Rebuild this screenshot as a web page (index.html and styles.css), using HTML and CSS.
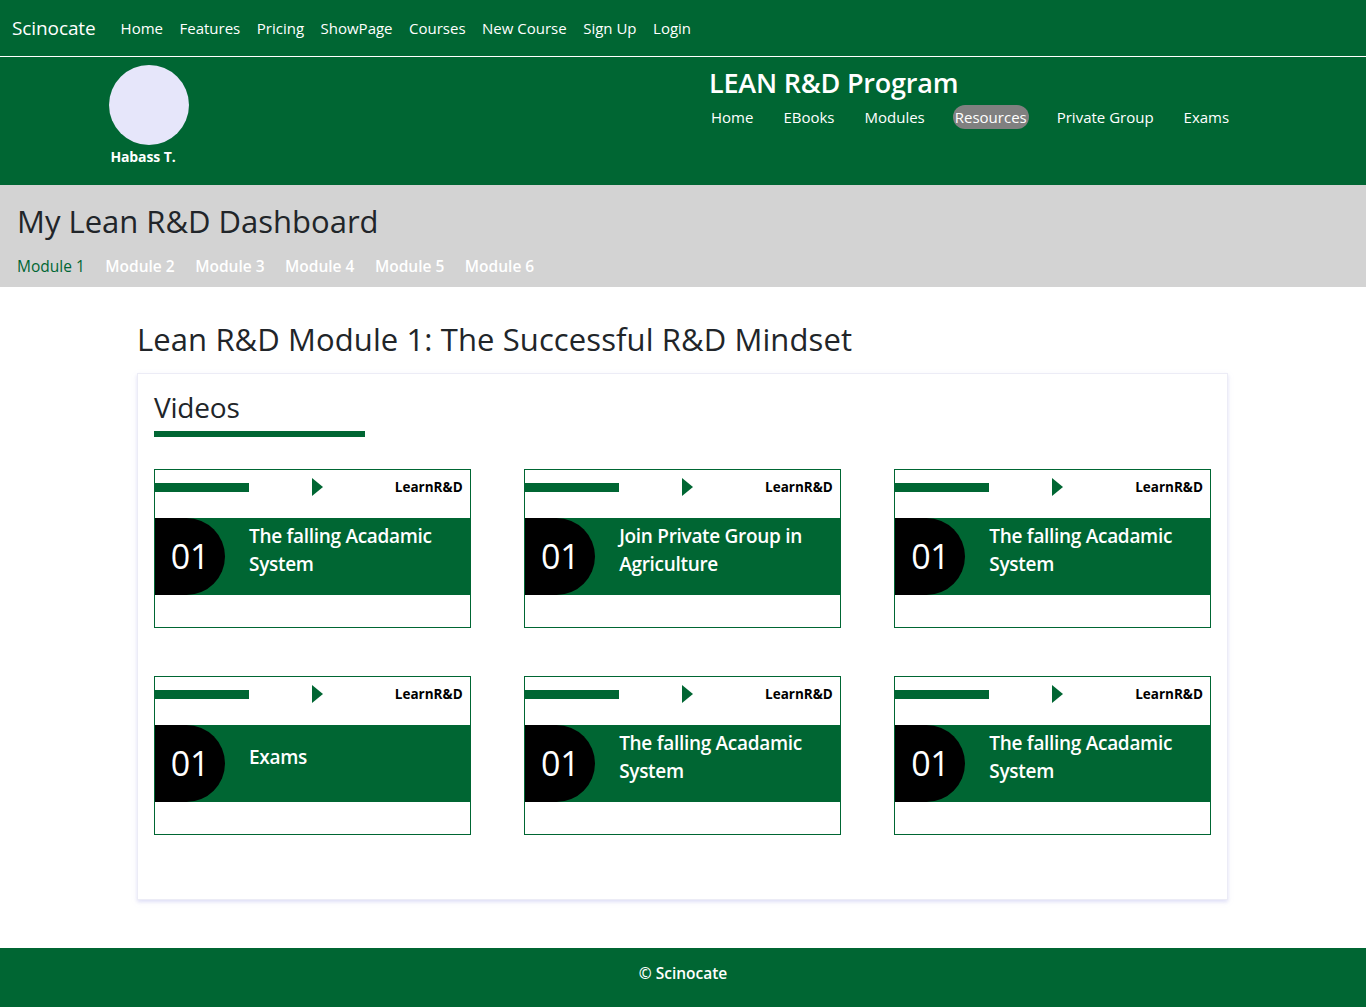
FILE: index.html
```html
<!DOCTYPE html>
<html lang="en">
<head>
<meta charset="utf-8">
<title>Scinocate - Lean R&amp;D Dashboard</title>
<link rel="stylesheet" href="styles.css">
</head>
<body>
<nav class="topnav">
  <a class="brand" href="#">Scinocate</a>
  <ul class="toplinks">
    <li><a href="#">Home</a></li>
    <li><a href="#">Features</a></li>
    <li><a href="#">Pricing</a></li>
    <li><a href="#">ShowPage</a></li>
    <li><a href="#">Courses</a></li>
    <li><a href="#">New Course</a></li>
    <li><a href="#">Sign Up</a></li>
    <li><a href="#">Login</a></li>
  </ul>
</nav>
<header class="program">
  <div class="profile">
    <div class="avatar"></div>
    <div class="username">Habass T.</div>
  </div>
  <div class="program-info">
    <h1 class="program-title">LEAN R&amp;D Program</h1>
    <ul class="program-links">
      <li><a href="#">Home</a></li>
      <li><a href="#">EBooks</a></li>
      <li><a href="#">Modules</a></li>
      <li><a class="active" href="#">Resources</a></li>
      <li><a href="#">Private Group</a></li>
      <li><a href="#">Exams</a></li>
    </ul>
  </div>
</header>
<section class="dashboard">
  <h2 class="dash-title">My Lean R&amp;D Dashboard</h2>
  <ul class="module-links">
    <li><a class="current" href="#">Module 1</a></li>
    <li><a href="#">Module 2</a></li>
    <li><a href="#">Module 3</a></li>
    <li><a href="#">Module 4</a></li>
    <li><a href="#">Module 5</a></li>
    <li><a href="#">Module 6</a></li>
  </ul>
</section>
<main class="content">
  <h2 class="module-title">Lean R&amp;D Module 1: The Successful R&amp;D Mindset</h2>
  <div class="panel">
    <h3 class="panel-title">Videos</h3>
    <div class="underline"></div>
    <div class="grid">
      <div class="vcard">
        <div class="vtop"><span class="vbar"></span><span class="play"></span><span class="vlogo">LearnR&amp;D</span></div>
        <div class="vband"><span class="num">01</span><span class="vtitle">The falling Acadamic System</span></div>
      </div>
      <div class="vcard">
        <div class="vtop"><span class="vbar"></span><span class="play"></span><span class="vlogo">LearnR&amp;D</span></div>
        <div class="vband"><span class="num">01</span><span class="vtitle">Join Private Group in Agriculture</span></div>
      </div>
      <div class="vcard">
        <div class="vtop"><span class="vbar"></span><span class="play"></span><span class="vlogo">LearnR&amp;D</span></div>
        <div class="vband"><span class="num">01</span><span class="vtitle">The falling Acadamic System</span></div>
      </div>
      <div class="vcard">
        <div class="vtop"><span class="vbar"></span><span class="play"></span><span class="vlogo">LearnR&amp;D</span></div>
        <div class="vband"><span class="num">01</span><span class="vtitle">Exams</span></div>
      </div>
      <div class="vcard">
        <div class="vtop"><span class="vbar"></span><span class="play"></span><span class="vlogo">LearnR&amp;D</span></div>
        <div class="vband"><span class="num">01</span><span class="vtitle">The falling Acadamic System</span></div>
      </div>
      <div class="vcard">
        <div class="vtop"><span class="vbar"></span><span class="play"></span><span class="vlogo">LearnR&amp;D</span></div>
        <div class="vband"><span class="num">01</span><span class="vtitle">The falling Acadamic System</span></div>
      </div>
    </div>
  </div>
</main>
<footer class="footer">&copy; Scinocate</footer>
</body>
</html>
```
FILE: styles.css
```css
* { box-sizing: border-box; }
html, body { margin: 0; padding: 0; }
body {
  font-family: "Open Sans", "Noto Sans", "DejaVu Sans", sans-serif;
  color: #212529;
  background: #fff;
}
a { text-decoration: none; color: inherit; }
ul { list-style: none; margin: 0; padding: 0; }
h1, h2, h3 { margin: 0; font-weight: 400; }

.topnav {
  background: #006633;
  height: 57px;
  border-bottom: 1px solid #fff;
  display: flex;
  align-items: center;
  padding: 0 12px;
}
.brand { color: #fff; font-size: 19px; margin-right: 25px; letter-spacing: -0.1px; }
.toplinks { display: flex; gap: 16.5px; }
.toplinks a { color: #fff; font-size: 15px; letter-spacing: 0; }

.program {
  background: #006633;
  height: 128px;
  display: flex;
  color: #fff;
}
.profile {
  width: 286px;
  padding-left: 109px;
  padding-top: 8px;
}
.avatar {
  width: 80px; height: 80px; border-radius: 50%;
  background: #e6e6fa;
}
.username {
  font-size: 14px; font-weight: 700; margin-top: 2px;
  width: 68px; text-align: center; letter-spacing: -0.1px;
}
.program-info { padding-left: 423px; padding-top: 7px; }
.program-title { font-size: 27px; font-weight: 600; letter-spacing: -0.2px; line-height: 38px; }
.program-links { display: flex; margin-top: 3px; }
.program-links a {
  display: block; color: #fff; font-size: 15px; padding: 2px 2px; border-radius: 12px;
  margin-right: 26px; letter-spacing: 0;
}
.program-links a.active { background: #808080; }

.dashboard {
  background: #d3d3d3;
  height: 102px;
  padding: 16px 17px 0;
}
.dash-title { font-size: 31px; line-height: 40px; letter-spacing: 0; }
.module-links { display: flex; gap: 20.5px; margin-top: 14px; }
.module-links a { color: #fff; font-size: 15.5px; font-weight: 600; letter-spacing: 0; }
.module-links a.current { color: #006633; font-weight: 400; }

.content { padding: 32px 138px 48px 137px; }
.module-title { font-size: 31px; line-height: 40px; letter-spacing: 0.1px; margin-bottom: 14px; }
.panel {
  border: 1px solid #ececf6;
  box-shadow: 0 2px 4px rgba(200, 200, 240, 0.6);
  padding: 16px 16px 64px;
  height: 527px;
}
.panel-title { font-size: 28px; line-height: 34px; letter-spacing: -0.2px; }
.underline { width: 211px; height: 6px; background: #006633; margin-top: 7px; margin-bottom: 32px; }
.grid {
  display: grid;
  grid-template-columns: repeat(3, 1fr);
  column-gap: 53.5px;
  row-gap: 48px;
}
.vcard {
  border: 1px solid #006633;
  height: 159px;
  background: #fff;
}
.vtop {
  height: 48px;
  display: flex;
  align-items: center;
  padding-bottom: 14px;
}
.vbar { width: 94px; height: 9px; background: #006633; }
.play {
  width: 0; height: 0;
  border-top: 9px solid transparent;
  border-bottom: 9px solid transparent;
  border-left: 11px solid #006633;
  margin-left: 63px;
}
.vlogo { margin-left: auto; margin-right: 7px; font-size: 13.5px; font-weight: 700; color: #000; letter-spacing: 0; }
.vband {
  background: #006633;
  height: 77px;
  display: flex;
  align-items: center;
  padding-bottom: 13px;
}
.num {
  width: 70px; height: 77px; flex: none;
  background: #000; color: #fff;
  border-radius: 0 40px 40px 0;
  font-size: 34px; line-height: 77px; text-align: center;
  letter-spacing: -0.3px;
  align-self: flex-start;
}
.vtitle {
  color: #fff; font-size: 19px; font-weight: 600; line-height: 28px;
  margin-left: 24px; letter-spacing: -0.3px; max-width: 215px;
}

.footer {
  background: #006633;
  color: #fff;
  height: 59px;
  display: flex; align-items: center; justify-content: center;
  padding-bottom: 10px;
  font-size: 15.5px; font-weight: 600; letter-spacing: 0;
}
```
